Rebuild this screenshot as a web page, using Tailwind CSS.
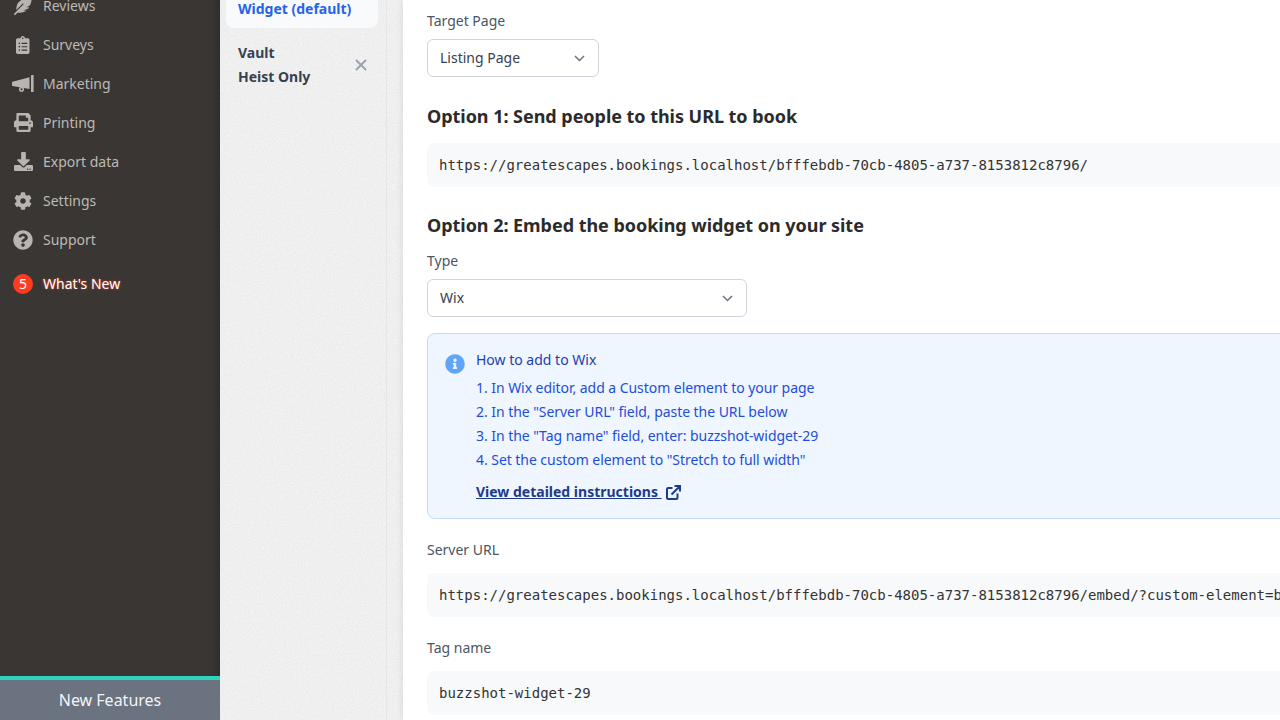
<!DOCTYPE html>
<html lang="en">

<head>
  <meta charset="UTF-8">
  <title>Widget settings</title>
  <script src="https://cdn.jsdelivr.net/npm/@tailwindcss/browser@4"></script>
</head>

<body class="h-screen w-screen overflow-hidden font-['Noto_Sans',sans-serif] text-sm bg-[#f4f4f4]">
  <div class="flex h-screen w-[1280px]">

    <!-- Main nav -->
    <aside class="relative z-10 flex flex-col w-[220px] h-full shrink-0 bg-[#3a3634] shadow-[inset_-10px_0_10px_-8px_rgba(0,0,0,0.25)]">
      <nav class="flex-1 -mt-[14px] text-[#bdb9b5] overflow-hidden">
        <a class="flex items-center h-[39px] pl-[12px]">
          <span class="flex justify-center w-[22px] mr-[9px]">
            <svg class="w-[18px] h-[18px] fill-[#b8b4b0]" viewBox="0 0 512 512"><path d="M512 0C460.22 3.56 96.44 38.2 71.01 287.61c-3.09 26.66-4.84 53.44-5.99 80.24l178.87-178.69c6.25-6.25 16.4-6.25 22.65 0s6.25 16.38 0 22.63L7.04 471.03c-9.38 9.37-9.38 24.57 0 33.94 9.38 9.37 24.59 9.37 33.98 0l57.13-57.07c42.09-.14 84.15-2.53 125.96-7.36 53.48-5.44 97.02-26.47 132.58-56.54H255.74l146.79-48.88c11.25-14.89 21.37-30.71 30.45-47.12h-81.14l106.54-53.21C500.29 132.86 510.19 26.26 512 0z"/></svg>
          </span>
          Reviews
        </a>
        <a class="flex items-center h-[39px] pl-[12px]">
          <span class="flex justify-center w-[22px] mr-[9px]">
            <svg class="h-[18px] fill-[#b8b4b0]" viewBox="0 0 384 512"><path d="M336 64h-80c0-35.3-28.7-64-64-64s-64 28.7-64 64H48C21.5 64 0 85.5 0 112v352c0 26.5 21.5 48 48 48h288c26.5 0 48-21.5 48-48V112c0-26.5-21.5-48-48-48zM96 424c-13.3 0-24-10.7-24-24s10.7-24 24-24 24 10.7 24 24-10.7 24-24 24zm0-96c-13.3 0-24-10.7-24-24s10.7-24 24-24 24 10.7 24 24-10.7 24-24 24zm0-96c-13.3 0-24-10.7-24-24s10.7-24 24-24 24 10.7 24 24-10.7 24-24 24zm96-192c13.3 0 24 10.7 24 24s-10.7 24-24 24-24-10.7-24-24 10.7-24 24-24zm128 368c0 4.4-3.6 8-8 8H168c-4.4 0-8-3.6-8-8v-16c0-4.4 3.6-8 8-8h144c4.4 0 8 3.6 8 8v16zm0-96c0 4.4-3.6 8-8 8H168c-4.4 0-8-3.6-8-8v-16c0-4.4 3.6-8 8-8h144c4.4 0 8 3.6 8 8v16zm0-96c0 4.4-3.6 8-8 8H168c-4.4 0-8-3.6-8-8v-16c0-4.4 3.6-8 8-8h144c4.4 0 8 3.6 8 8v16z"/></svg>
          </span>
          Surveys
        </a>
        <a class="flex items-center h-[39px] pl-[12px]">
          <span class="flex justify-center w-[22px] mr-[9px]">
            <svg class="w-[22px] h-[18px] shrink-0 fill-[#b8b4b0] stroke-[#b8b4b0]" viewBox="0 0 22 18"><path stroke="none" d="M0.5 6.8Q0 7 0 7.5V10.5Q0 11 0.5 11.1L17.5 14V2.2Z"/><rect stroke="none" x="19" y="0" width="2.6" height="17" rx="0.5"/><circle cx="9.5" cy="14.2" r="1.8" fill="none" stroke-width="1.5"/></svg>
          </span>
          Marketing
        </a>
        <a class="flex items-center h-[39px] pl-[12px]">
          <span class="flex justify-center w-[22px] mr-[9px]">
            <svg class="w-[19px] h-[19px] fill-[#b8b4b0]" viewBox="0 0 512 512"><path d="M448 192V77.25c0-8.49-3.37-16.62-9.37-22.63L393.37 9.37c-6-6-14.14-9.37-22.63-9.37H96C78.33 0 64 14.33 64 32v160c-35.35 0-64 28.65-64 64v112c0 8.84 7.16 16 16 16h48v96c0 17.67 14.33 32 32 32h320c17.67 0 32-14.33 32-32v-96h48c8.84 0 16-7.16 16-16V256c0-35.35-28.65-64-64-64zm-64 256H128v-96h256v96zm0-224H128V64h192v48c0 8.84 7.16 16 16 16h48v96zm48 72c-13.25 0-24-10.75-24-24 0-13.26 10.75-24 24-24s24 10.74 24 24c0 13.25-10.75 24-24 24z"/></svg>
          </span>
          Printing
        </a>
        <a class="flex items-center h-[39px] pl-[12px]">
          <span class="flex justify-center w-[22px] mr-[9px]">
            <svg class="w-[19px] h-[19px] fill-[#b8b4b0]" viewBox="0 0 512 512"><path d="M216 0h80c13.3 0 24 10.7 24 24v168h87.7c17.8 0 26.7 21.5 14.1 34.1L269.7 378.3c-7.5 7.5-19.8 7.5-27.3 0L90.1 226.1c-12.6-12.6-3.7-34.1 14.1-34.1H192V24c0-13.3 10.7-24 24-24zm296 376v112c0 13.3-10.7 24-24 24H24c-13.3 0-24-10.7-24-24V376c0-13.3 10.7-24 24-24h146.7l49 49c20.1 20.1 52.5 20.1 72.6 0l49-49H488c13.3 0 24 10.7 24 24zm-124 88c0-11-9-20-20-20s-20 9-20 20 9 20 20 20 20-9 20-20zm64 0c0-11-9-20-20-20s-20 9-20 20 9 20 20 20 20-9 20-20z"/></svg>
          </span>
          Export data
        </a>
        <a class="flex items-center h-[39px] pl-[12px]">
          <span class="flex justify-center w-[22px] mr-[9px]">
            <svg class="w-[18px] h-[18px] fill-[#b8b4b0]" viewBox="0 0 512 512"><path d="M487.4 315.7l-42.6-24.6c4.3-23.2 4.3-47 0-70.2l42.6-24.6c4.9-2.8 7.1-8.6 5.5-14-11.1-35.6-30-67.8-54.7-94.6-3.8-4.1-10-5.1-14.8-2.3L380.8 110c-17.9-15.4-38.5-27.3-60.8-35.1V25.8c0-5.6-3.9-10.5-9.4-11.7-36.7-8.2-74.3-7.8-109.2 0-5.5 1.2-9.4 6.1-9.4 11.7V75c-22.2 7.9-42.8 19.8-60.8 35.1L88.7 85.5c-4.9-2.8-11-1.9-14.8 2.3-24.7 26.7-43.6 58.9-54.7 94.6-1.7 5.4.6 11.2 5.5 14L67.3 221c-4.3 23.2-4.3 47 0 70.2l-42.6 24.6c-4.9 2.8-7.1 8.6-5.5 14 11.1 35.6 30 67.8 54.7 94.6 3.8 4.1 10 5.1 14.8 2.3l42.6-24.6c17.9 15.4 38.5 27.3 60.8 35.1v49.2c0 5.6 3.9 10.5 9.4 11.7 36.7 8.2 74.3 7.8 109.2 0 5.5-1.2 9.4-6.1 9.4-11.7v-49.2c22.2-7.9 42.8-19.8 60.8-35.1l42.6 24.6c4.9 2.8 11 1.9 14.8-2.3 24.7-26.7 43.6-58.9 54.7-94.6 1.5-5.5-.7-11.3-5.6-14.1zM256 336c-44.1 0-80-35.9-80-80s35.9-80 80-80 80 35.9 80 80-35.9 80-80 80z"/></svg>
          </span>
          Settings
        </a>
        <a class="flex items-center h-[39px] pl-[12px]">
          <span class="flex justify-center w-[22px] mr-[9px]">
            <svg class="w-[20px] h-[20px] fill-[#b8b4b0]" viewBox="0 0 512 512"><path d="M504 256c0 136.997-111.043 248-248 248S8 392.997 8 256C8 119.083 119.043 8 256 8s248 111.083 248 248zM262.655 90c-54.497 0-89.255 22.957-116.549 63.758-3.536 5.286-2.353 12.415 2.715 16.258l34.699 26.31c5.205 3.947 12.621 3.008 16.665-2.122 17.864-22.658 30.113-35.797 57.303-35.797 20.429 0 45.698 13.148 45.698 32.958 0 14.976-12.363 22.667-32.534 33.976C247.128 238.528 216 254.941 216 296v4c0 6.627 5.373 12 12 12h56c6.627 0 12-5.373 12-12v-1.333c0-28.462 83.186-29.647 83.186-106.667 0-58.002-60.165-102-116.531-102zM256 338c-25.365 0-46 20.635-46 46 0 25.364 20.635 46 46 46s46-20.636 46-46c0-25.365-20.635-46-46-46z"/></svg>
          </span>
          Support
        </a>
        <a class="flex items-center h-[39px] mt-[5px] pl-[12px] text-white [text-shadow:0_0_3px_rgba(255,60,30,0.95)]">
          <span class="flex justify-center items-center w-[22px] mr-[9px]">
            <span class="flex justify-center items-center w-[20px] h-[20px] rounded-full bg-[#ff3b22] text-white text-sm [text-shadow:none]">5</span>
          </span>
          What's New
        </a>
      </nav>
      <div class="flex items-center justify-center h-[44px] shrink-0 border-t-4 border-[#2dd4bf] bg-[#6b7280] text-base text-[#f3f4f6]">New Features</div>
    </aside>

    <!-- Widget list + paper strip -->
    <div class="relative flex h-full shrink-0">
      <svg class="absolute inset-0 w-full h-full opacity-[0.05] pointer-events-none">
        <filter id="paper"><feTurbulence type="fractalNoise" baseFrequency="0.9" numOctaves="2" /><feColorMatrix values="0 0 0 0 0 0 0 0 0 0 0 0 0 0 0 0 0 0 1.4 -0.3" /></filter>
        <rect width="100%" height="100%" filter="url(#paper)" />
      </svg>
      <section class="relative w-[167px] h-full border-r border-[#e5e5e5]">
        <div class="ml-[6px] w-[152px] h-[40px] -mt-[12px] pt-[9px] px-[12px] rounded-lg bg-[#f9fafb] font-bold leading-6 text-[#2563eb]">Widget (default)</div>
        <div class="flex items-center justify-between mt-[13px] pl-[18px] pr-[19px] font-bold leading-6 text-[#374151]">
          <span>Vault<br>Heist Only</span>
          <svg class="w-[12px] h-[12px] stroke-[#9ca3af] stroke-2" viewBox="0 0 12 12" fill="none"><path d="M1 1l10 10M11 1L1 11" /></svg>
        </div>
      </section>
      <div class="w-[16px] h-full"></div>
    </div>

    <main class="relative flex-1 min-w-0 h-full overflow-hidden bg-white pl-[24px] pt-[9px] shadow-[0_0_8px_rgba(0,0,0,0.1)] text-[#4b5563]">
      <label class="block leading-6">Target Page</label>
      <div class="flex items-center justify-between w-[172px] h-[38px] mt-[6px] pl-[12px] pr-[13px] border border-[#d1d5db] rounded-md text-[#374151]">
        Listing Page
        <svg class="w-[11px] h-[7px] stroke-[#6b7280] stroke-[1.5]" viewBox="0 0 11 7" fill="none"><path d="M1 1l4.5 4.5L10 1" /></svg>
      </div>

      <h2 class="mt-[25px] text-lg font-bold leading-7 tracking-[-0.04px] text-[#2b2b2b]">Option 1: Send people to this URL to book</h2>
      <div class="flex items-center h-[44px] mt-[13px] -mr-[24px] pl-[12px] rounded-lg bg-[#f8f9fb] whitespace-nowrap overflow-hidden font-['DejaVu_Sans_Mono',monospace] text-[#333333]">https://greatescapes.bookings.localhost/bfffebdb-70cb-4805-a737-8153812c8796/</div>

      <h2 class="mt-[24px] text-lg font-bold leading-7 tracking-[-0.04px] text-[#2b2b2b]">Option 2: Embed the booking widget on your site</h2>
      <label class="block mt-[10px] leading-6">Type</label>
      <div class="flex items-center justify-between w-[320px] h-[38px] mt-[6px] pl-[12px] pr-[13px] border border-[#d1d5db] rounded-md text-[#374151]">
        Wix
        <svg class="w-[11px] h-[7px] stroke-[#6b7280] stroke-[1.5]" viewBox="0 0 11 7" fill="none"><path d="M1 1l4.5 4.5L10 1" /></svg>
      </div>

      <div class="flex h-[186px] mt-[16px] -mr-[24px] pt-[14px] pl-[17px] border border-[#bfdbfe] rounded-lg bg-[#eff6ff] text-[#1d4ed8]">
        <svg class="w-[20px] h-[20px] mt-[6px] mr-[11px] shrink-0 fill-[#60a5fa]" viewBox="0 0 512 512"><path d="M256 8C119.043 8 8 119.083 8 256c0 136.997 111.043 248 248 248s248-111.003 248-248C504 119.083 392.957 8 256 8zm0 110c23.196 0 42 18.804 42 42s-18.804 42-42 42-42-18.804-42-42 18.804-42 42-42zm56 254c0 6.627-5.373 12-12 12h-88c-6.627 0-12-5.373-12-12v-24c0-6.627 5.373-12 12-12h12v-64h-12c-6.627 0-12-5.373-12-12v-24c0-6.627 5.373-12 12-12h64c6.627 0 12 5.373 12 12v100h12c6.627 0 12 5.373 12 12v24z"/></svg>
        <div class="leading-6">
          <p class="text-[#1e40af]">How to add to Wix</p>
          <ol class="mt-[4px] tracking-[-0.05px]">
            <li>1. In Wix editor, add a Custom element to your page</li>
            <li>2. In the "Server URL" field, paste the URL below</li>
            <li>3. In the "Tag name" field, enter: buzzshot-widget-29</li>
            <li>4. Set the custom element to "Stretch to full width"</li>
          </ol>
          <a class="flex items-center mt-[8px] font-bold text-[#1e3a8a]">
            <span class="underline">View detailed instructions&nbsp;</span>
            <svg class="w-[15px] h-[15px] ml-[4px] stroke-[#1e3a8a] stroke-2" viewBox="0 0 15 15" fill="none"><path d="M6.5 3H2.2A1.2 1.2 0 0 0 1 4.2v8.6A1.2 1.2 0 0 0 2.2 14h8.1a1.2 1.2 0 0 0 1.2-1.2V8.5M8.5 1H14v5.5M14 1L5.5 9.5" /></svg>
          </a>
        </div>
      </div>

      <label class="block mt-[19px] leading-6">Server URL</label>
      <div class="flex items-center h-[44px] mt-[11px] -mr-[24px] pl-[12px] rounded-lg bg-[#f8f9fb] whitespace-nowrap overflow-hidden font-['DejaVu_Sans_Mono',monospace] text-[#333333]">https://greatescapes.bookings.localhost/bfffebdb-70cb-4805-a737-8153812c8796/embed/?custom-element=buzzshot-widget-29</div>

      <label class="block mt-[19px] leading-6">Tag name</label>
      <div class="flex items-center h-[44px] mt-[11px] -mr-[24px] pl-[12px] rounded-lg bg-[#f8f9fb] whitespace-nowrap overflow-hidden font-['DejaVu_Sans_Mono',monospace] text-[#333333]">buzzshot-widget-29</div>
    </main>
  </div>
</body>

</html>
